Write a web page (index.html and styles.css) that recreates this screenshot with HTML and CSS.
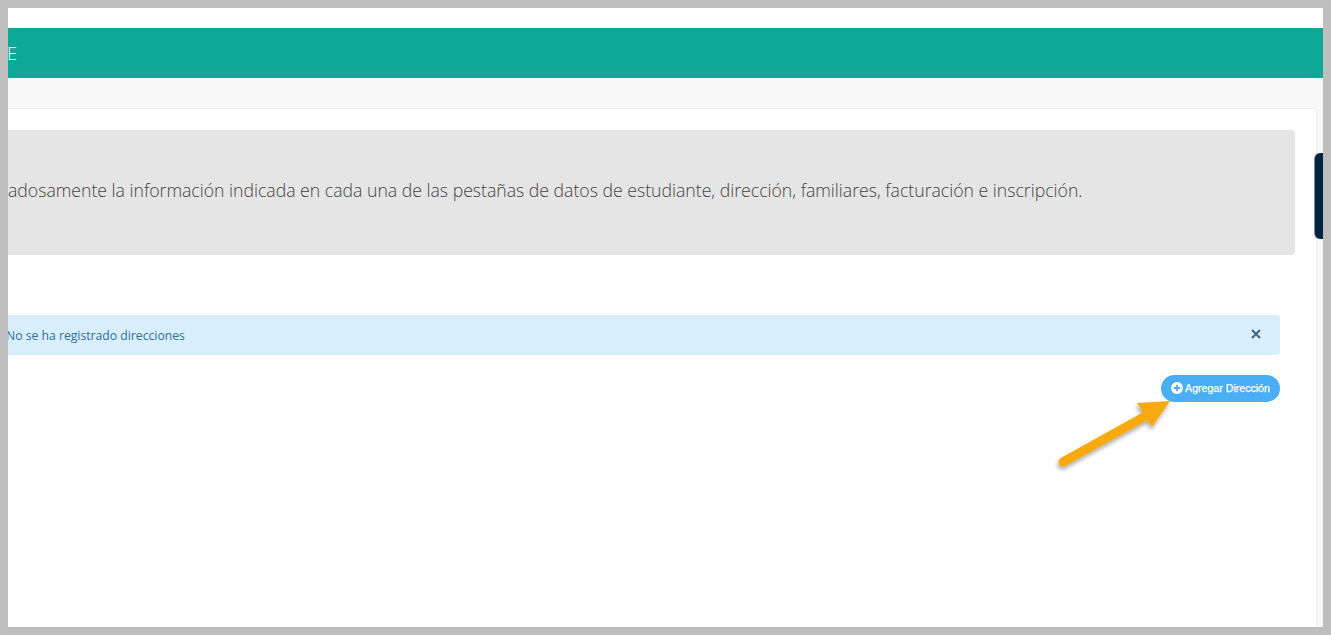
FILE: index.html
```html
<!DOCTYPE html>
<html>
<head>
  <title>Agregar Dirección</title>
  <link rel="stylesheet" href="styles.css">
</head>
<body>
  <div class="frame">
    <div class="top-space"></div>
    <div class="title-bar"><span class="title-text">E</span></div>
    <div class="page-band"></div>
    <div class="card">
      <div class="notice">
        <p class="notice-text">adosamente la información indicada en cada una de las pestañas de datos de estudiante, dirección, familiares, facturación e inscripción.</p>
      </div>
      <div class="alert">
        <span class="alert-text">No se ha registrado direcciones</span>
        <svg class="alert-close" width="10" height="10" viewBox="0 0 10 10">
          <path d="M1 1L9 9M9 1L1 9" stroke="#41667f" stroke-width="2" fill="none"/>
        </svg>
      </div>
      <div class="actions">
        <button class="add-button">
          <svg class="add-icon" width="12" height="12" viewBox="0 0 12 12">
            <circle cx="6" cy="6" r="6" fill="#fff"/>
            <path d="M6 2.8V9.2M2.8 6H9.2" stroke="#4aaef5" stroke-width="1.8"/>
          </svg>
          <span class="add-label">Agregar Dirección</span>
        </button>
      </div>
    </div>
    <div class="side-tab"></div>
    <svg class="arrow" width="140" height="90" viewBox="0 0 140 90">
      <defs>
        <filter id="arrow-shadow" x="-20%" y="-20%" width="140%" height="150%">
          <feDropShadow dx="-1" dy="3" stdDeviation="2" flood-color="#000" flood-opacity="0.35"/>
        </filter>
      </defs>
      <g filter="url(#arrow-shadow)">
        <path d="M23 78L104 33" stroke="#f7a90a" stroke-width="9" stroke-linecap="round"/>
        <path d="M130 17L97 19L112 43Z" fill="#f7a90a"/>
      </g>
    </svg>
  </div>
</body>
</html>
```

FILE: styles.css
```css
html, body {
  height: 100%;
}

body {
  margin: 0;
  background-color: #bdbdbd;
  padding: 8px;
  box-sizing: border-box;
  font-family: "Open Sans", Arial, sans-serif;
  overflow: hidden;
}

.frame {
  position: relative;
  height: 619px;
  background-color: #f9f9f9;
  display: flex;
  flex-direction: column;
  overflow: hidden;
}

.top-space {
  height: 20px;
  background-color: #fff;
}

.title-bar {
  height: 50px;
  background-color: #0da897;
  color: #fff;
  display: flex;
  align-items: center;
}

.title-text {
  font-size: 18px;
  font-weight: 300;
  margin-left: -1px;
}

.page-band {
  height: 30px;
}

.card {
  flex: 1;
  margin-right: 6px;
  background-color: #fff;
  border-top: 1px solid #eeeeee;
  border-right: 1px solid #eeeeee;
  border-top-right-radius: 4px;
  padding: 21px 21px 0 0;
}

.notice {
  height: 125px;
  background-color: #e5e5e5;
  border-radius: 0 3px 3px 0;
  display: flex;
  align-items: center;
}

.notice-text {
  margin: 0 0 5px 0;
  font-size: 17.65px;
  font-weight: 300;
  color: #444;
  white-space: nowrap;
}

.alert {
  height: 40px;
  margin: 60px 15px 0 0;
  background-color: #d9eefc;
  border-radius: 0 3px 3px 0;
  display: flex;
  align-items: center;
  justify-content: space-between;
  padding-right: 19px;
}

.alert-text {
  font-size: 12.2px;
  color: #2d6f9e;
  margin-left: -2px;
}

.alert-close {
  margin-bottom: 2px;
}

.actions {
  display: flex;
  justify-content: flex-end;
  margin: 20px 15px 0 0;
}

.add-button {
  height: 27px;
  width: 119px;
  padding: 0 0 2px 0;
  border: none;
  border-radius: 14px;
  background-color: #4aaef5;
  color: #fff;
  font-family: "Liberation Sans", Arial, sans-serif;
  font-size: 10.6px;
  display: flex;
  align-items: center;
  justify-content: center;
  gap: 2px;
}

.add-label {
  -webkit-text-stroke: 0.25px #fff;
}

.side-tab {
  position: absolute;
  right: 0;
  top: 145px;
  width: 9px;
  height: 86px;
  background-color: #03233f;
  border-radius: 6px 0 0 6px;
  border-left: 1px solid #7d8b99;
  box-sizing: border-box;
}

.arrow {
  position: absolute;
  left: 1032px;
  top: 376px;
}
```
